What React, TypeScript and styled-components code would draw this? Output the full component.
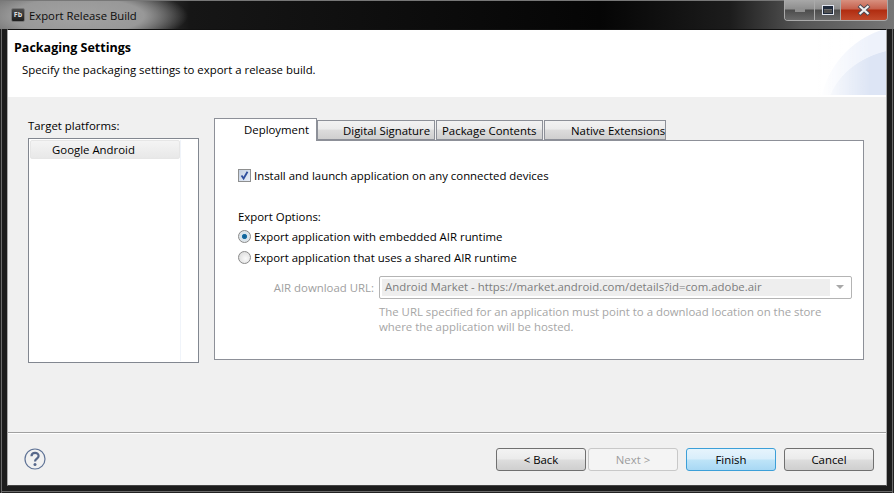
import React from "react";
import styled, { createGlobalStyle } from "styled-components";

const Global = createGlobalStyle`
  html, body { margin: 0; padding: 0; background: #111; }
  #root { width: 894px; height: 493px; }
`;

const uiFont = `"Open Sans", "Noto Sans", "Liberation Sans", sans-serif`;

const Frame = styled.div`
  width: 894px;
  height: 493px;
  box-sizing: border-box;
  display: flex;
  flex-direction: column;
  overflow: hidden;
  font-family: ${uiFont};
  font-size: 11.4px;
  color: #000;
  background: #1c1c1c;
  box-shadow: inset 1px 0 0 #222, inset 2px 0 0 #6a6a6a, inset -1px 0 0 #222, inset -2px 0 0 #6a6a6a, inset 0 -1px 0 #222, inset 0 -2px 0 #6a6a6a;
`;

const TitleBar = styled.div`
  height: 29px;
  flex: none;
  display: flex;
  align-items: flex-start;
  justify-content: space-between;
  padding-left: 11px;
  padding-right: 6px;
  box-sizing: border-box;
  border-top: 1px solid #777;
  background:
    radial-gradient(ellipse 110px 30px at 78px 15px, #a2a2a2 0%, #989898 60%, rgba(120, 120, 120, 0) 100%),
    linear-gradient(90deg, #6a6a6a 0, #4a4a4a 130px, #161616 190px, #050505 600px, #1c1c1c 730px, #555 800px, #777 894px);
`;

const AppIdentity = styled.div`
  display: flex;
  align-items: center;
  gap: 4px;
  height: 28px;
`;

const AppIcon = styled.div`
  width: 14px;
  height: 14px;
  border-radius: 2px;
  background: linear-gradient(#4d4d4d, #1e1e1e);
  border: 1px solid #777;
  box-sizing: border-box;
  color: #ddd;
  font: 700 7px ${uiFont};
  line-height: 12px;
  text-align: center;
`;

const TitleText = styled.span`
  font-size: 11.3px;
  color: #0c0c0c;
`;

const WindowControls = styled.div`
  display: flex;
  height: 20px;
  margin-top: -1px;
  border: 1px solid #aaa;
  border-top: none;
  border-radius: 0 0 4px 4px;
  overflow: hidden;
`;

const ControlButton = styled.div<{ $w: number; $close?: boolean }>`
  width: ${(p) => p.$w}px;
  display: flex;
  align-items: center;
  justify-content: center;
  border-left: 1px solid #aaa;
  box-sizing: border-box;
  &:first-child { border-left: none; }
  background: ${(p) =>
    p.$close
      ? "linear-gradient(#d8907f 0, #c5604c 45%, #b02c10 50%, #c24a2c 100%)"
      : "linear-gradient(#a8a8a8 0, #8e8e8e 45%, #4c4c4c 50%, #6a6a6a 100%)"};
`;

const Client = styled.div`
  flex: 1;
  margin: 0 7px 7px 7px;
  display: flex;
  flex-direction: column;
  background: #f0f0f0;
  border: 1px solid #a8a8a8;
  border-top-color: #111;
  border-bottom-color: #444;
  min-height: 0;
`;

const Header = styled.div`
  height: 67px;
  flex: none;
  box-sizing: border-box;
  padding: 8px 0 0 6px;
  border-bottom: 2px solid;
  border-image: linear-gradient(#9f9f9f 50%, #fff 50%) 2;
  background:
    linear-gradient(90deg, #fff 810px, rgba(255, 255, 255, 0) 862px),
    radial-gradient(ellipse 84px 68px at 902px 86px, #dde5f5 0%, #dde5f5 99%, rgba(221, 229, 245, 0) 100%),
    radial-gradient(circle 91px at 902px 86px, #eef2fb 0%, #eef2fb 99%, rgba(238, 242, 251, 0) 100%),
    #fff;
`;

const HeaderTitle = styled.div`
  font-weight: 700;
  font-size: 12.5px;
  line-height: 20px;
`;

const HeaderDesc = styled.div`
  margin: 4px 0 0 8px;
  line-height: 16px;
`;

const Body = styled.div`
  flex: 1;
  display: flex;
  gap: 15px;
  padding: 21px 21px 0 20px;
  min-height: 0;
`;

const PlatformColumn = styled.div`
  width: 171px;
  flex: none;
`;

const FieldLabel = styled.div`
  line-height: 16px;
  margin-bottom: 4px;
`;

const PlatformList = styled.div`
  height: 225px;
  box-sizing: border-box;
  border: 1px solid #828790;
  background: #fff;
  padding: 1px;
`;

const ListGutter = styled.div`
  width: 150px;
  height: 100%;
  border-right: 1px solid #f0f4fa;
`;

const PlatformRow = styled.div`
  height: 19px;
  box-sizing: border-box;
  width: 150px;
  padding-left: 21px;
  line-height: 17px;
  border: 1px solid #e6e6e6;
  border-radius: 2px;
  background: linear-gradient(#f4f4f4, #e8e8e8);
`;

const TabsColumn = styled.div`
  width: 650px;
  flex: none;
`;

const TabStrip = styled.div`
  display: flex;
  align-items: flex-end;
  height: 22px;
  gap: 1px;
`;

const Tab = styled.div<{ $w: number; $active?: boolean; $pad?: number }>`
  width: ${(p) => p.$w}px;
  box-sizing: border-box;
  height: ${(p) => (p.$active ? 23 : 20)}px;
  margin-bottom: ${(p) => (p.$active ? -1 : 0)}px;
  position: relative;
  z-index: ${(p) => (p.$active ? 1 : 0)};
  border: 1px solid #8d9098;
  border-bottom: ${(p) => (p.$active ? "none" : "1px solid #8d9098")};
  padding-left: ${(p) => p.$pad ?? 0}px;
  line-height: ${(p) => (p.$active ? 21 : 19)}px;
  white-space: nowrap;
  background: ${(p) =>
    p.$active ? "#fff" : "linear-gradient(#f2f2f2 0, #ebebeb 45%, #dcdcdc 50%, #cfcfcf 100%)"};
  &:first-child { margin-right: -1px; }
`;

const TabPanel = styled.div`
  height: 220px;
  box-sizing: border-box;
  border: 1px solid #8d9098;
  background: #fff;
  padding: 25px 11px 0 23px;
`;

const CheckRow = styled.div`
  display: flex;
  align-items: center;
  gap: 3px;
  height: 18px;
`;

const CheckBox = styled.div`
  width: 13px;
  height: 13px;
  box-sizing: border-box;
  border: 1px solid #8e8f8f;
  background: linear-gradient(135deg, #c4d0e2, #e8eef8);
  display: flex;
  align-items: center;
  justify-content: center;
`;

const OptionsLabel = styled.div`
  margin: 25px 0 1px;
  line-height: 16px;
`;

const RadioRow = styled.div`
  display: flex;
  align-items: center;
  gap: 3px;
  height: 21px;
`;

const Radio = styled.div<{ $on?: boolean }>`
  width: 13px;
  height: 13px;
  box-sizing: border-box;
  border-radius: 50%;
  border: 1px solid #8a8a8a;
  background: ${(p) =>
    p.$on
      ? "radial-gradient(circle, #0d5c8f 0, #1a6fa5 28%, #d8e4ec 38%, #e6e6e6 100%)"
      : "radial-gradient(circle at 60% 60%, #fafafa, #d6d6d6)"};
`;

const UrlRow = styled.div`
  display: flex;
  align-items: center;
  margin-top: 7px;
  color: #a0a0a0;
  height: 24px;
`;

const UrlLabel = styled.div`
  width: 141px;
  padding-right: 5px;
  box-sizing: border-box;
  text-align: right;
  white-space: nowrap;
`;

const ComboBox = styled.div`
  width: 473px;
  height: 23px;
  box-sizing: border-box;
  border: 1px solid #b4b4b4;
  border-radius: 2px;
  background: #fff;
  padding: 2px;
  display: flex;
`;

const ComboText = styled.div`
  flex: 1;
  background: #eeeeee;
  padding-left: 3px;
  line-height: 16px;
  color: #7d7d7d;
  white-space: nowrap;
`;

const ComboArrow = styled.div`
  width: 19px;
  display: flex;
  align-items: center;
  justify-content: center;
`;

const UrlHint = styled.div`
  margin: 5px 0 0 141px;
  width: 460px;
  color: #a6a6a6;
  line-height: 15px;
`;

const Footer = styled.div`
  height: 53px;
  flex: none;
  border-top: 1px solid #a0a0a0;
  box-shadow: inset 0 1px 0 #fff;
  display: flex;
  align-items: flex-start;
  padding: 15px 12px 0 16px;
  box-sizing: border-box;
`;

const HelpIcon = styled.svg`
  width: 22px;
  height: 22px;
  flex: none;
`;

const ButtonRow = styled.div`
  margin-left: auto;
  display: flex;
`;

const DialogButton = styled.div<{ $variant?: "disabled" | "primary"; $gap?: number }>`
  width: 90px;
  height: 23px;
  box-sizing: border-box;
  margin-left: ${(p) => p.$gap ?? 0}px;
  border-radius: 3px;
  text-align: center;
  line-height: 21px;
  border: 1px solid ${(p) => (p.$variant === "disabled" ? "#c8c8c8" : p.$variant === "primary" ? "#3c9fd8" : "#707070")};
  color: ${(p) => (p.$variant === "disabled" ? "#9c9c9c" : "#000")};
  background: ${(p) =>
    p.$variant === "disabled"
      ? "#f4f4f4"
      : p.$variant === "primary"
      ? "linear-gradient(#e6f4fc 0, #d8eefb 48%, #bee4f8 52%, #a8d8f4 100%)"
      : "linear-gradient(#f3f3f3 0, #ebebeb 48%, #dddddd 52%, #cfcfcf 100%)"};
`;

export default function App() {
  return (
    <>
      <Global />
      <Frame>
        <TitleBar>
          <AppIdentity>
            <AppIcon>Fb</AppIcon>
            <TitleText>Export Release Build</TitleText>
          </AppIdentity>
          <WindowControls>
            <ControlButton $w={29}>
              <svg width="12" height="5"><rect x="1" y="1" width="10" height="3" fill="#8f8f8f" /></svg>
            </ControlButton>
            <ControlButton $w={26}>
              <svg width="12" height="10"><rect x="0.5" y="0.5" width="11" height="9" fill="none" stroke="#dfe4ee" strokeWidth="1" /><rect x="1.5" y="1.5" width="9" height="7" fill="none" stroke="#1f2a3c" strokeWidth="1" /><rect x="2" y="2" width="8" height="2" fill="#1f2a3c" /></svg>
            </ControlButton>
            <ControlButton $w={47} $close>
              <svg width="14" height="12" viewBox="0 0 14 12"><path d="M2 1.5 L12 10.5 M12 1.5 L2 10.5" stroke="#4a4a55" strokeWidth="4" /><path d="M2.5 2 L11.5 10 M11.5 2 L2.5 10" stroke="#f2f2f2" strokeWidth="2.2" /></svg>
            </ControlButton>
          </WindowControls>
        </TitleBar>
        <Client>
          <Header>
            <HeaderTitle>Packaging Settings</HeaderTitle>
            <HeaderDesc>Specify the packaging settings to export a release build.</HeaderDesc>
          </Header>
          <Body>
            <PlatformColumn>
              <FieldLabel>Target platforms:</FieldLabel>
              <PlatformList>
                <ListGutter>
                  <PlatformRow>Google Android</PlatformRow>
                </ListGutter>
              </PlatformList>
            </PlatformColumn>
            <TabsColumn>
              <TabStrip>
                <Tab $w={103} $active $pad={29}>Deployment</Tab>
                <Tab $w={118} $pad={25}>Digital Signature</Tab>
                <Tab $w={107} $pad={5}>Package Contents</Tab>
                <Tab $w={122} $pad={26}>Native Extensions</Tab>
              </TabStrip>
              <TabPanel>
                <CheckRow>
                  <CheckBox>
                    <svg width="11" height="11" viewBox="0 0 11 11"><path d="M2.5 5.5 L4.6 8.5 L8.5 1.8" fill="none" stroke="#2f4f9e" strokeWidth="1.8" /></svg>
                  </CheckBox>
                  <span>Install and launch application on any connected devices</span>
                </CheckRow>
                <OptionsLabel>Export Options:</OptionsLabel>
                <RadioRow>
                  <Radio $on />
                  <span>Export application with embedded AIR runtime</span>
                </RadioRow>
                <RadioRow>
                  <Radio />
                  <span>Export application that uses a shared AIR runtime</span>
                </RadioRow>
                <UrlRow>
                  <UrlLabel>AIR download URL:</UrlLabel>
                  <ComboBox>
                    <ComboText>Android Market - https://market.android.com/details?id=com.adobe.air</ComboText>
                    <ComboArrow>
                      <svg width="8" height="4"><path d="M0 0 H8 L4 4 Z" fill="#a8a8a8" /></svg>
                    </ComboArrow>
                  </ComboBox>
                </UrlRow>
                <UrlHint>
                  The URL specified for an application must point to a download location on the store where the application will be hosted.
                </UrlHint>
              </TabPanel>
            </TabsColumn>
          </Body>
          <Footer>
            <HelpIcon viewBox="0 0 22 22">
              <circle cx="11" cy="11" r="10" fill="#f1f1f1" stroke="#5f7396" strokeWidth="1.2" />
              <path d="M7.5 8.3 C7.5 3.8 14.6 4 14.6 8 C14.6 10.5 11 10.6 11 13.4" fill="none" stroke="#56678a" strokeWidth="2.2" />
              <circle cx="11" cy="16.4" r="1.5" fill="#56678a" />
            </HelpIcon>
            <ButtonRow>
              <DialogButton>&lt; Back</DialogButton>
              <DialogButton $variant="disabled" $gap={2}>Next &gt;</DialogButton>
              <DialogButton $variant="primary" $gap={8}>Finish</DialogButton>
              <DialogButton $gap={8}>Cancel</DialogButton>
            </ButtonRow>
          </Footer>
        </Client>
      </Frame>
    </>
  );
}
